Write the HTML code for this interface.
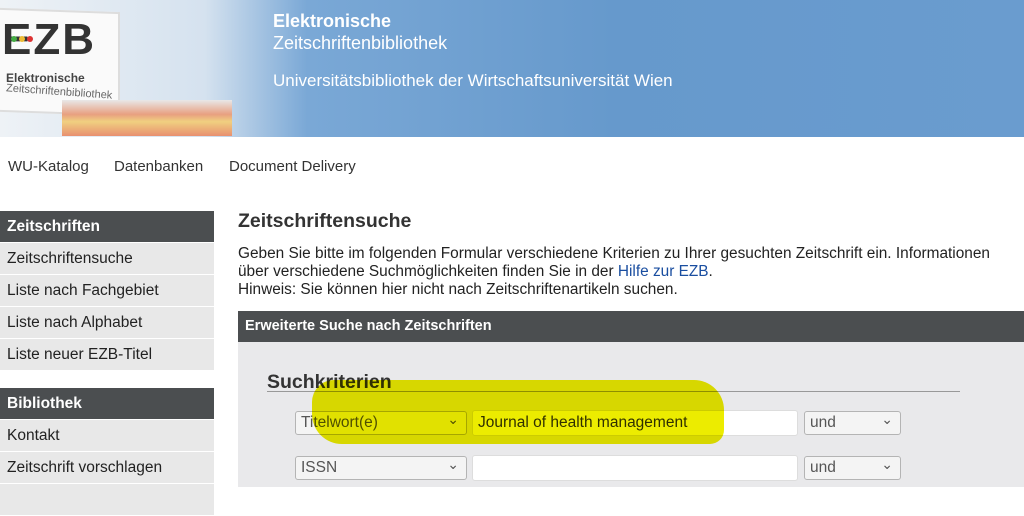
<!DOCTYPE html>
<html><head><meta charset="utf-8"><style>
body{margin:0;width:1024px;height:487px;overflow:hidden;font-family:"Liberation Sans",sans-serif;background:#fff;position:relative}
.hdr{position:absolute;left:0;top:0;width:1024px;height:137px;background:linear-gradient(90deg,#eef2f6 0%,#d5e2ef 20%,#7aa8d6 30%,#6699cc 60%,#6a9ccf 100%)}
.a{position:absolute;white-space:nowrap}
.side{position:absolute;left:0;width:214px;background:#e8e8e8;font-size:15.5px;color:#222}
.side div{height:31px;line-height:31px;padding-left:7px;border-bottom:1px solid #fff}
.side .h{background:#4b4e50;color:#fff;font-weight:bold}
.sel{position:absolute;height:24px;border:1px solid #b4b4b4;border-radius:3px;background:#f4f4f4;box-sizing:border-box;font-size:15.5px;color:#555;line-height:22px;padding-left:5px}
.sel:after{content:"⌄";position:absolute;right:7px;top:-4px;font-size:14px}
.inp{position:absolute;height:26px;border:1px solid #ddd;border-radius:3px;background:#fff;box-sizing:border-box;font-size:15.5px;color:#333;line-height:24px;padding-left:5px}
</style></head><body>
<div class="hdr"></div>
<div class="a" style="left:0;top:10px;width:118px;height:100px;background:#fafafa;border:2px solid #ddd;border-left:none;transform:skewY(2deg)"></div>
<div class="a" style="left:2px;top:15px;font-size:44px;font-weight:bold;color:#333;letter-spacing:2px">EZB</div>
<div class="a" style="left:11px;top:36px;width:6px;height:6px;border-radius:3px;background:#4a4"></div>
<div class="a" style="left:19px;top:36px;width:6px;height:6px;border-radius:3px;background:#eb3"></div>
<div class="a" style="left:27px;top:36px;width:6px;height:6px;border-radius:3px;background:#d33"></div>
<div class="a" style="left:6px;top:71px;font-size:12px;font-weight:bold;color:#444">Elektronische</div>
<div class="a" style="left:6px;top:86px;font-size:11px;color:#666;transform:rotate(4deg)">Zeitschriftenbibliothek</div>
<div class="a" style="left:62px;top:100px;width:170px;height:36px;background:linear-gradient(#e8e8e8,#e8a080 40%,#f0d080 60%,#e89070)"></div>
<div class="a" style="left:273px;top:11px;color:#fff;font-size:18px;font-weight:bold">Elektronische</div>
<div class="a" style="left:273px;top:33px;color:#fff;font-size:18px">Zeitschriftenbibliothek</div>
<div class="a" style="left:273px;top:71px;color:#fff;font-size:17px">Universitätsbibliothek der Wirtschaftsuniversität Wien</div>
<div class="a" style="left:8px;top:158px;font-size:15px;color:#333">WU-Katalog</div>
<div class="a" style="left:114px;top:158px;font-size:15px;color:#333">Datenbanken</div>
<div class="a" style="left:229px;top:158px;font-size:15px;color:#333">Document Delivery</div>
<div class="side" style="top:211px"><div class="h">Zeitschriften</div><div>Zeitschriftensuche</div><div>Liste nach Fachgebiet</div><div>Liste nach Alphabet</div><div>Liste neuer EZB-Titel</div></div>
<div class="side" style="top:388px"><div class="h">Bibliothek</div><div>Kontakt</div><div>Zeitschrift vorschlagen</div><div></div></div>
<div class="a" style="left:238px;top:210px;font-size:19.5px;font-weight:bold;color:#333">Zeitschriftensuche</div>
<div class="a" style="left:238px;top:245px;font-size:15.4px;color:#222;line-height:18px">Geben Sie bitte im folgenden Formular verschiedene Kriterien zu Ihrer gesuchten Zeitschrift ein. Informationen<br>über verschiedene Suchmöglichkeiten finden Sie in der <span style="color:#1a4ea0">Hilfe zur EZB</span>.<br>Hinweis: Sie können hier nicht nach Zeitschriftenartikeln suchen.</div>
<div class="a" style="left:238px;top:311px;width:786px;height:31px;background:#4b4e50;color:#fff;font-weight:bold;font-size:14.5px;line-height:31px;padding-left:7px;box-sizing:border-box">Erweiterte Suche nach Zeitschriften</div>
<div class="a" style="left:238px;top:342px;width:786px;height:145px;background:#e9e9eb"></div>
<div class="a" style="left:267px;top:371px;font-size:19.5px;font-weight:bold;color:#333">Suchkriterien</div>
<div class="a" style="left:267px;top:391px;width:693px;height:1px;background:#999"></div>
<div class="sel" style="left:295px;top:411px;width:172px">Titelwort(e)</div>
<div class="inp" style="left:472px;top:410px;width:326px">Journal of health management</div>
<div class="sel" style="left:804px;top:411px;width:97px">und</div>
<div class="sel" style="left:295px;top:456px;width:172px">ISSN</div>
<div class="inp" style="left:472px;top:455px;width:326px"></div>
<div class="sel" style="left:804px;top:456px;width:97px">und</div>
<div class="a" style="left:312px;top:380px;width:412px;height:64px;background:#ecec00;mix-blend-mode:multiply;border-radius:22px 30px 14px 30px"></div>
</body></html>
